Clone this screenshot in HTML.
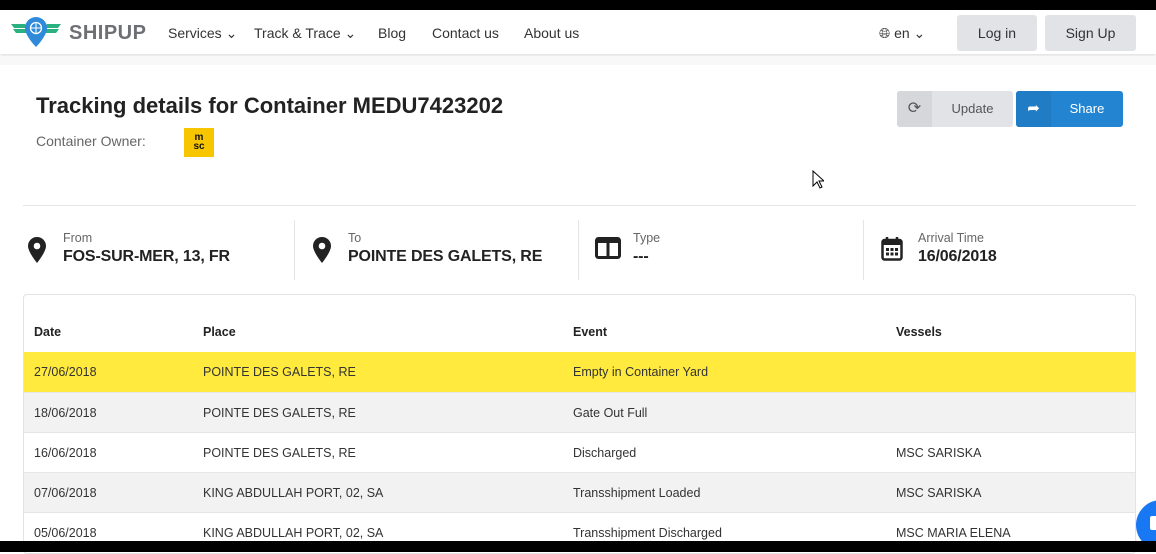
<!DOCTYPE html>
<html><head><meta charset="utf-8"><style>
*{margin:0;padding:0;box-sizing:border-box}
body{width:1156px;height:552px;overflow:hidden;background:#fff;font-family:"Liberation Sans",sans-serif;color:#222;position:relative}
.topbar{position:absolute;left:0;top:0;width:1156px;height:10px;background:#000}
.botbar{position:absolute;left:0;top:541px;width:1156px;height:11px;background:#000;z-index:5}
.hdr{position:absolute;left:0;top:10px;width:1156px;height:44px;background:#fff;box-shadow:0 2px 3px rgba(0,0,0,.12)}
.strip{position:absolute;left:0;top:56px;width:1156px;height:9px;background:#f8f8f8}
.nav{position:absolute;top:25px;font-size:14px;color:#333}
.btn{position:absolute;top:15px;height:36px;background:#e2e3e6;border-radius:3px;font-size:14px;color:#333;text-align:center;line-height:36px}
.abs{position:absolute}
.lbl{font-size:12.5px;color:#666}
.val{font-size:16px;font-weight:bold;color:#222;letter-spacing:-0.15px}
.tbl{position:absolute;left:23px;top:294px;width:1113px;height:260px;border:1px solid #e3e3e3;border-radius:4px;overflow:hidden}
.row{position:absolute;left:0;width:1111px;height:40px;font-size:12.5px;color:#333;border-top:1px solid #e6e6e6}
.row span{position:absolute;top:13px}
</style></head><body>
<div class="topbar"></div>
<div class="hdr"></div>
<div class="strip"></div>
<svg class="abs" style="left:10px;top:16px" width="52" height="32" viewBox="0 0 52 32">
<path d="M1 8h14l2 4H4z M3 13h14l1 4H6z M51 8H37l-2 4h13z M49 13H35l-1 4h12z" fill="#2bb07f"/>
<path d="M26 1a11 11 0 0 1 11 11c0 8-11 19-11 19S15 20 15 12A11 11 0 0 1 26 1z" fill="#2f8bd9"/>
<circle cx="26" cy="12" r="5.5" fill="none" stroke="#fff" stroke-width="1.3"/>
<path d="M20.5 12h11M26 6.5v11" stroke="#fff" stroke-width="1"/>
</svg>
<div class="abs" style="left:69px;top:22px;font-size:20px;font-weight:bold;color:#6d6f73;letter-spacing:.5px">SHIPUP</div>
<div class="nav" style="left:168px">Services ⌄</div>
<div class="nav" style="left:254px">Track &amp; Trace ⌄</div>
<div class="nav" style="left:378px">Blog</div>
<div class="nav" style="left:432px">Contact us</div>
<div class="nav" style="left:524px">About us</div>
<div class="nav" style="left:879px">🌐︎ en ⌄</div>
<div class="btn" style="left:957px;width:80px">Log in</div>
<div class="btn" style="left:1045px;width:91px">Sign Up</div>

<div class="abs" style="left:36px;top:93px;font-size:22px;font-weight:bold;color:#222">Tracking details for Container MEDU7423202</div>
<div class="abs" style="left:36px;top:133px;font-size:14px;color:#666">Container Owner:</div>
<div class="abs" style="left:184px;top:128px;width:30px;height:29px;background:#f7c600;font-size:10px;font-weight:bold;line-height:9px;text-align:center;padding-top:5px;color:#111">m<br>sc</div>

<div class="abs" style="left:897px;top:91px;width:116px;height:36px;background:#e2e3e6;border-radius:3px">
<div style="position:absolute;left:0;top:0;width:35px;height:36px;background:#d6d7da;border-radius:3px 0 0 3px;text-align:center;line-height:36px;color:#555;font-size:16px">⟳</div>
<div style="position:absolute;left:35px;width:81px;text-align:center;line-height:36px;font-size:13px;color:#555">Update</div></div>
<div class="abs" style="left:1016px;top:91px;width:107px;height:36px;background:#2385d2;border-radius:3px">
<div style="position:absolute;left:0;top:0;width:35px;height:36px;background:#1f7cc5;border-radius:3px 0 0 3px;text-align:center;line-height:36px;color:#fff;font-size:15px">➦</div>
<div style="position:absolute;left:35px;width:72px;text-align:center;line-height:36px;font-size:13px;color:#fff">Share</div></div>
<svg class="abs" style="left:812px;top:170px" width="12" height="19"><path d="M1 1v15l4-4 3 6 2-1-3-6h5z" fill="#fff" stroke="#000"/></svg>

<div class="abs" style="left:23px;top:205px;width:1113px;height:1px;background:#e5e5e5"></div>
<div class="abs" style="left:294px;top:220px;width:1px;height:60px;background:#e5e5e5"></div>
<div class="abs" style="left:578px;top:220px;width:1px;height:60px;background:#e5e5e5"></div>
<div class="abs" style="left:863px;top:220px;width:1px;height:60px;background:#e5e5e5"></div>

<svg class="abs" style="left:28px;top:237px" width="18" height="26" viewBox="0 0 18 26"><path d="M9 0a9 9 0 0 1 9 9c0 6-9 17-9 17S0 15 0 9a9 9 0 0 1 9-9z" fill="#222"/><circle cx="9" cy="9" r="3.3" fill="#fff"/></svg>
<div class="abs lbl" style="left:63px;top:231px">From</div>
<div class="abs val" style="left:63px;top:248px">FOS-SUR-MER, 13, FR</div>
<svg class="abs" style="left:313px;top:237px" width="18" height="26" viewBox="0 0 18 26"><path d="M9 0a9 9 0 0 1 9 9c0 6-9 17-9 17S0 15 0 9a9 9 0 0 1 9-9z" fill="#222"/><circle cx="9" cy="9" r="3.3" fill="#fff"/></svg>
<div class="abs lbl" style="left:348px;top:231px">To</div>
<div class="abs val" style="left:348px;top:248px">POINTE DES GALETS, RE</div>
<svg class="abs" style="left:595px;top:237px" width="26" height="22" viewBox="0 0 26 22"><rect x="1.5" y="1.5" width="23" height="19" rx="2" fill="none" stroke="#222" stroke-width="3"/><rect x="1" y="1" width="24" height="5" fill="#222"/><path d="M13 3v18" stroke="#222" stroke-width="3"/></svg>
<div class="abs lbl" style="left:633px;top:231px">Type</div>
<div class="abs val" style="left:633px;top:248px">---</div>
<svg class="abs" style="left:881px;top:236px" width="22" height="25" viewBox="0 0 22 25"><rect x="1.5" y="4" width="19" height="19.5" rx="2" fill="none" stroke="#222" stroke-width="2.5"/><rect x="1" y="4" width="20" height="5" fill="#222"/><path d="M6 1v5M16 1v5" stroke="#222" stroke-width="2.5"/><path d="M5 12h3v3H5zM9.5 12h3v3h-3zM14 12h3v3h-3zM5 16.5h3v3H5zM9.5 16.5h3v3h-3zM14 16.5h3v3h-3z" fill="#222"/></svg>
<div class="abs lbl" style="left:918px;top:231px">Arrival Time</div>
<div class="abs val" style="left:918px;top:248px">16/06/2018</div>

<div class="tbl">
<div class="row" style="top:17px;border:none;font-weight:bold;color:#222;font-size:12.5px"><span style="left:10px">Date</span><span style="left:179px">Place</span><span style="left:549px">Event</span><span style="left:872px">Vessels</span></div>
<div class="row" style="top:57px;background:#ffea3d;border:none"><span style="left:10px">27/06/2018</span><span style="left:179px">POINTE DES GALETS, RE</span><span style="left:549px">Empty in Container Yard</span></div>
<div class="row" style="top:97px;background:#f2f2f2"><span style="left:10px">18/06/2018</span><span style="left:179px">POINTE DES GALETS, RE</span><span style="left:549px">Gate Out Full</span></div>
<div class="row" style="top:137px"><span style="left:10px">16/06/2018</span><span style="left:179px">POINTE DES GALETS, RE</span><span style="left:549px">Discharged</span><span style="left:872px">MSC SARISKA</span></div>
<div class="row" style="top:177px;background:#f2f2f2"><span style="left:10px">07/06/2018</span><span style="left:179px">KING ABDULLAH PORT, 02, SA</span><span style="left:549px">Transshipment Loaded</span><span style="left:872px">MSC SARISKA</span></div>
<div class="row" style="top:217px"><span style="left:10px">05/06/2018</span><span style="left:179px">KING ABDULLAH PORT, 02, SA</span><span style="left:549px">Transshipment Discharged</span><span style="left:872px">MSC MARIA ELENA</span></div>
</div>
<div class="abs" style="left:1136px;top:500px;width:50px;height:50px;border-radius:50%;background:#1877f2"></div>
<div class="abs" style="left:1150px;top:516px;width:12px;height:14px;background:#fff;border-radius:2px"></div>
<div class="botbar"></div>
</body></html>
